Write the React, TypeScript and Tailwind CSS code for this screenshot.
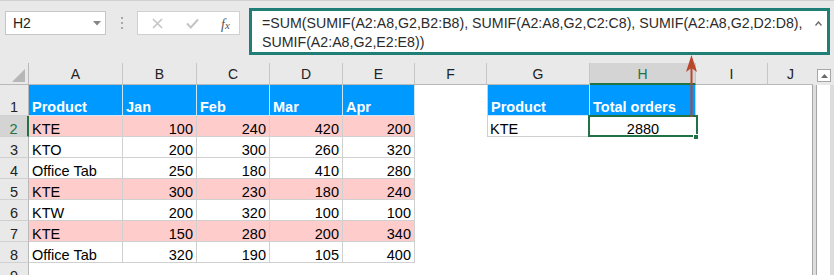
import React from 'react';

const COLS = [
  'w-[94px]',
  'w-[74px]',
  'w-[73px]',
  'w-[73px]',
  'w-[72px]',
  'w-[72px]',
  'w-[103px]',
  'w-[106px]',
  'w-[72px]',
  'w-[45px]',
];
const LETTERS = ['A', 'B', 'C', 'D', 'E', 'F', 'G', 'H', 'I', 'J'];

type Row = { name: string; v: number[]; pink: boolean };
const DATA: Row[] = [
  { name: 'KTE', v: [100, 240, 420, 200], pink: true },
  { name: 'KTO', v: [200, 300, 260, 320], pink: false },
  { name: 'Office Tab', v: [250, 180, 410, 280], pink: false },
  { name: 'KTE', v: [300, 230, 180, 240], pink: true },
  { name: 'KTW', v: [200, 320, 100, 100], pink: false },
  { name: 'KTE', v: [150, 280, 200, 340], pink: true },
  { name: 'Office Tab', v: [320, 190, 105, 400], pink: false },
];

function RowHeader({ n, active, h, first }: { n: number; active?: boolean; h: string; first?: boolean }) {
  return (
    <div
      className={`w-[29px] ${h} shrink-0 flex items-end justify-center leading-[14px] text-[14.5px] border-b border-[#d0d0d0] ${
        first ? 'pb-[1px]' : ''
      } ${
        active
          ? 'bg-[#d4d4d4] text-[#217346] border-r-2 border-r-[#217346]'
          : 'bg-[#e9e9e9] text-[#222] border-r border-r-[#b9b9b9]'
      }`}
    >
      {n}
    </div>
  );
}

export default function App() {
  return (
    <div className="relative w-[834px] h-[275px] overflow-hidden bg-white font-['Liberation_Sans',Arial,sans-serif] text-black">
      {/* Toolbar / formula bar */}
      <div className="h-[63px] bg-[#e9e9e9] border-t border-[#d2d2d2] flex items-start">
        <div className="relative ml-[5px] mt-[10px] w-[101px] h-[24px] border border-[#c6c6c6] bg-white flex items-center pl-[7px] text-[14px] text-[#222]">
          H2
          <svg className="absolute left-[87px] top-[9px]" width="8" height="5" viewBox="0 0 8 5">
            <polygon points="0,0 8,0 4,4.5" fill="#858585" />
          </svg>
        </div>
        <div className="ml-[15px] mt-[16px] flex flex-col gap-[3px]">
          <div className="w-[2px] h-[2px] bg-[#a8a8a8]" />
          <div className="w-[2px] h-[2px] bg-[#a8a8a8]" />
          <div className="w-[2px] h-[2px] bg-[#a8a8a8]" />
        </div>
        <div className="relative ml-[14px] mt-[10px] w-[103px] h-[24px] border border-[#d0d0d0] bg-white">
          <svg className="absolute left-[14px] top-[6px]" width="11" height="11" viewBox="0 0 11 11">
            <path d="M1 1 L10 10 M10 1 L1 10" stroke="#c4c4c4" strokeWidth="1.6" />
          </svg>
          <svg className="absolute left-[48px] top-[6px]" width="13" height="11" viewBox="0 0 13 11">
            <path d="M1 5.5 L4.8 9.5 L12 1.5" stroke="#c4c4c4" strokeWidth="2" fill="none" />
          </svg>
          <span className="absolute left-[83px] top-[2px] font-['Liberation_Serif',serif] italic text-[14px] text-[#555]">
            f<span className="text-[11px]">x</span>
          </span>
        </div>
        <div className="relative ml-[9px] mt-[7px] w-[581px] h-[47px] border-[3px] border-[#1f7f76] bg-white pl-[10px] pt-[3px] text-[14.2px] leading-[19px] text-[#2b2b2b] whitespace-nowrap">
          <div>=SUM(SUMIF(A2:A8,G2,B2:B8), SUMIF(A2:A8,G2,C2:C8), SUMIF(A2:A8,G2,D2:D8),</div>
          <div>SUMIF(A2:A8,G2,E2:E8))</div>
          <svg className="absolute right-[5px] top-[10px]" width="7" height="5" viewBox="0 0 7 5">
            <path d="M0.5 4.5 L3.5 1 L6.5 4.5" stroke="#6a6a6a" strokeWidth="1.4" fill="none" />
          </svg>
        </div>
      </div>

      <div className="flex">
        {/* Grid */}
        <div className="w-[813px] flex flex-col">
          {/* Column headers */}
          <div className="flex h-[22px]">
            <div className="relative w-[29px] shrink-0 bg-[#e9e9e9] border-r border-b border-[#b9b9b9]">
              <svg className="absolute left-[12px] top-[6px]" width="13" height="13" viewBox="0 0 13 13">
                <polygon points="13,0 13,13 0,13" fill="#b7b7b7" />
              </svg>
            </div>
            {LETTERS.map((l, i) => (
              <div
                key={l}
                className={`${COLS[i]} shrink-0 flex items-center justify-center text-[14px] pt-[2px] ${
                  l === 'H'
                    ? 'bg-[#d4d4d4] text-[#217346] border-b-2 border-[#217346] border-r border-r-[#c6c6c6]'
                    : `bg-[#e9e9e9] text-[#222] border-b border-[#b9b9b9] ${l === 'J' ? '' : 'border-r border-r-[#c6c6c6]'}`
                }`}
              >
                {l}
              </div>
            ))}
          </div>

          {/* Row 1 */}
          <div className="flex h-[31px]">
            <RowHeader n={1} h="h-[31px]" first />
            {['Product', 'Jan', 'Feb', 'Mar', 'Apr'].map((t, i) => (
              <div
                key={t}
                className={`${COLS[i]} shrink-0 bg-[#0099ff] border-r border-b border-[#cfe6f7] text-white font-bold text-[14.5px] leading-[14px] pb-[1px] flex items-end pl-[3px]`}
              >
                {t}
              </div>
            ))}
            <div className={`${COLS[5]} shrink-0`} />
            <div className={`${COLS[6]} shrink-0 bg-[#0099ff] border-r border-b border-[#cfe6f7] border-l border-l-[#d0d0d0] text-white font-bold text-[14.5px] leading-[14px] pb-[1px] flex items-end pl-[3px]`}>
              Product
            </div>
            <div className={`${COLS[7]} shrink-0 bg-[#0099ff] border-r border-b border-[#d0d0d0] text-white font-bold text-[14.5px] leading-[14px] pb-[1px] flex items-end pl-[3px]`}>
              Total orders
            </div>
            <div className={`${COLS[8]} shrink-0`} />
            <div className={`${COLS[9]} shrink-0 border-r border-[#a6a6a6]`} />
          </div>

          {/* Data rows */}
          {DATA.map((r, ri) => {
            const bg = r.pink ? 'bg-[#ffcccc]' : 'bg-white';
            return (
              <div key={ri} className="flex h-[21px]">
                <RowHeader n={ri + 2} h="h-[21px]" active={ri === 0} />
                <div className={`${COLS[0]} shrink-0 ${bg} border-r border-b border-[#d0d0d0] text-[14.5px] leading-[14px] flex items-end pl-[3px]`}>
                  {r.name}
                </div>
                {r.v.map((v, vi) => (
                  <div
                    key={vi}
                    className={`${COLS[vi + 1]} shrink-0 ${bg} border-r border-b border-[#d0d0d0] text-[14.5px] leading-[14px] flex items-end justify-end pr-[3px]`}
                  >
                    {v}
                  </div>
                ))}
                <div className={`${COLS[5]} shrink-0`} />
                {ri === 0 ? (
                  <>
                    <div className={`${COLS[6]} shrink-0 border-l border-r border-b border-[#d0d0d0] text-[14.5px] leading-[14px] flex items-end pl-[2px]`}>
                      KTE
                    </div>
                    <div className={`${COLS[7]} shrink-0 relative border-b border-[#d0d0d0] text-[14.5px] leading-[14px] flex items-end justify-center`}>
                      2880
                      <div className="absolute -left-[2px] -top-[1px] -right-[2px] -bottom-[1px] border-2 border-[#217346]" />
                      <div className="absolute left-[103px] top-[18px] w-[6px] h-[6px] bg-[#217346] border border-white" />
                    </div>
                  </>
                ) : (
                  <>
                    <div className={`${COLS[6]} shrink-0`} />
                    <div className={`${COLS[7]} shrink-0`} />
                  </>
                )}
                <div className={`${COLS[8]} shrink-0`} />
                <div className={`${COLS[9]} shrink-0 border-r border-[#a6a6a6]`} />
              </div>
            );
          })}

          {/* Row 9 */}
          <div className="flex h-[21px]">
            <RowHeader n={9} h="h-[21px]" />
            <div className="flex-1 border-r border-[#a6a6a6]" />
          </div>
        </div>

        {/* Vertical scrollbar */}
        <div className="w-[21px] flex flex-col">
          <div className="h-[22px] bg-[#e9e9e9] pl-[4px] pt-[6px]">
            <div className="w-[14px] h-[13px] border border-[#a6a6a6] bg-white flex items-center justify-center">
              <svg width="7" height="4" viewBox="0 0 7 4">
                <polygon points="0,4 7,4 3.5,0" fill="#6a6a6a" />
              </svg>
            </div>
          </div>
          <div className="flex h-[200px]">
            <div className="w-[3px] bg-[#dedede]" />
            <div className="w-[14px] border-l border-[#a6a6a6] bg-white" />
            <div className="w-[4px] bg-[#dcdcdc]" />
          </div>
        </div>
      </div>

      {/* Red arrow pointing to the formula bar */}
      <svg className="absolute left-[684px] top-[53px]" width="15" height="64" viewBox="0 0 15 64">
        <line x1="7.5" y1="14" x2="7.5" y2="64" stroke="#b9472c" strokeWidth="2" />
        <polygon points="7.5,2 13,19 7.5,15 2,19" fill="#b9472c" />
      </svg>
    </div>
  );
}
